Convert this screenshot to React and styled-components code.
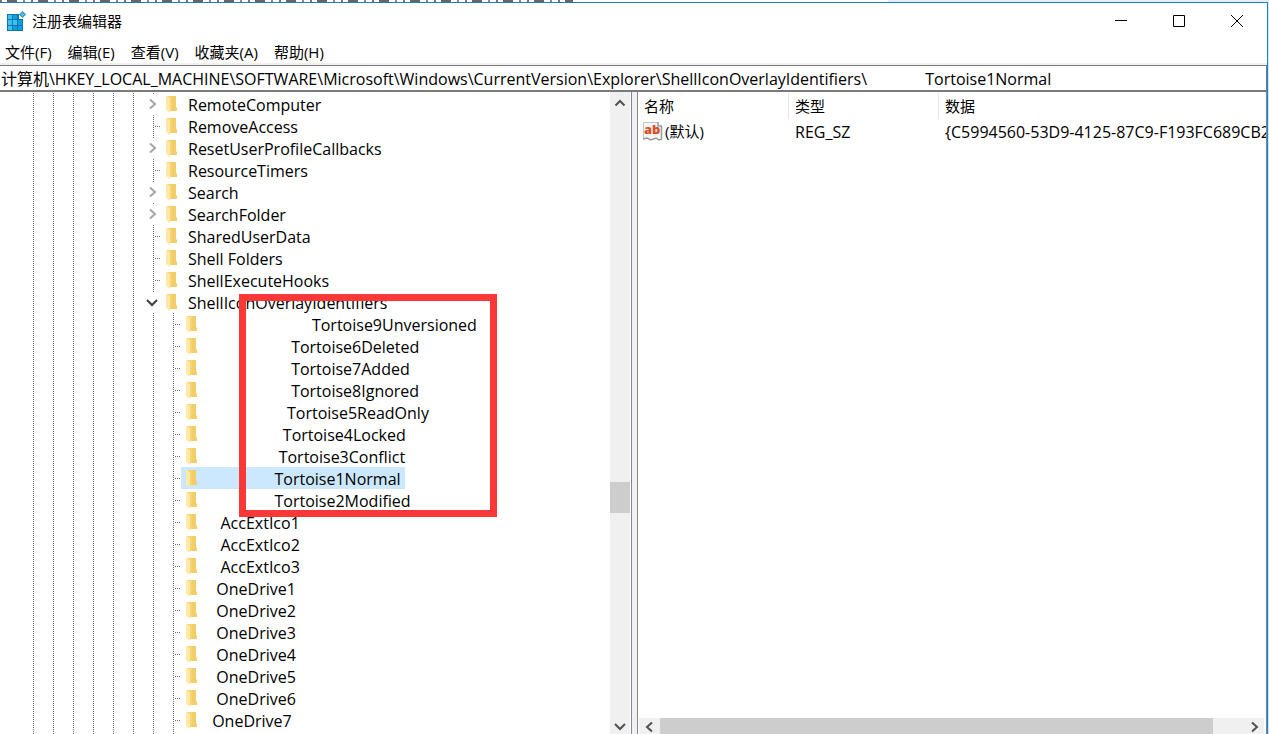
import styled, { createGlobalStyle } from 'styled-components'
import { useState } from 'react'

const NODES = [
    { level: 0, name: "RemoteComputer", state: "closed" },
    { level: 0, name: "RemoveAccess" },
    { level: 0, name: "ResetUserProfileCallbacks", state: "closed" },
    { level: 0, name: "ResourceTimers" },
    { level: 0, name: "Search", state: "closed" },
    { level: 0, name: "SearchFolder", state: "closed" },
    { level: 0, name: "SharedUserData" },
    { level: 0, name: "Shell Folders" },
    { level: 0, name: "ShellExecuteHooks" },
    { level: 0, name: "ShellIconOverlayIdentifiers", state: "open" },
    { level: 1, name: "Tortoise9Unversioned", spaces: 25 },
    { level: 1, name: "Tortoise6Deleted", spaces: 20 },
    { level: 1, name: "Tortoise7Added", spaces: 20 },
    { level: 1, name: "Tortoise8Ignored", spaces: 20 },
    { level: 1, name: "Tortoise5ReadOnly", spaces: 19 },
    { level: 1, name: "Tortoise4Locked", spaces: 18 },
    { level: 1, name: "Tortoise3Conflict", spaces: 17 },
    { level: 1, name: "Tortoise1Normal", spaces: 16 },
    { level: 1, name: "Tortoise2Modified", spaces: 16 },
    { level: 1, name: "AccExtIco1", spaces: 3 },
    { level: 1, name: "AccExtIco2", spaces: 3 },
    { level: 1, name: "AccExtIco3", spaces: 3 },
    { level: 1, name: "OneDrive1", spaces: 2 },
    { level: 1, name: "OneDrive2", spaces: 2 },
    { level: 1, name: "OneDrive3", spaces: 2 },
    { level: 1, name: "OneDrive4", spaces: 2 },
    { level: 1, name: "OneDrive5", spaces: 2 },
    { level: 1, name: "OneDrive6", spaces: 2 },
    { level: 1, name: "OneDrive7", spaces: 1 },
]
const MENUS = ["文件(F)", "编辑(E)", "查看(V)", "收藏夹(A)", "帮助(H)"]
const ROOT_PATH = "计算机\\HKEY_LOCAL_MACHINE\\SOFTWARE\\Microsoft\\Windows\\CurrentVersion\\Explorer\\ShellIconOverlayIdentifiers\\"

const GlobalStyle = createGlobalStyle`
    * {
        box-sizing: border-box;
    }
    body {
        margin: 0;
        overflow: hidden;
        background-color: #d5e6f5;
    }
    body, button, input {
        font-family: "Open Sans", "Noto Sans CJK SC", sans-serif;
        font-size: 15px;
        line-height: 22px;
        color: #000;
    }
`
const Screen = styled.div`
    display: flex;
    flex-direction: column;
    height: 100vh;
    padding-right: 1px;
`
const Behind = styled.div`
    height: 2px;
    flex: none;
    background:
        repeating-linear-gradient(90deg, #777 0 2px, transparent 2px 7px, #666 7px 17px, transparent 17px 23px, #888 23px 25px, transparent 25px 31px) 0 0 / 573px 2px no-repeat,
        linear-gradient(90deg, #fff 70%, #e4eef8 70%);
`
const Window = styled.div`
    flex: 1;
    min-height: 0;
    display: flex;
    flex-direction: column;
    background-color: #fff;
    border-top: 1px solid #1a7fd0;
    border-right: 1px solid #1a7fd0;
`
const TitleBar = styled.header`
    display: flex;
    align-items: center;
    height: 36px;
    flex: none;
    padding: 0 1px 0 6px;
`
const Title = styled.h1`
    flex: 1;
    margin: 0 0 0 6px;
    font-size: 15px;
    font-weight: normal;
`
const CaptionButton = styled.button`
    display: flex;
    align-items: center;
    justify-content: center;
    width: 58px;
    height: 36px;
    padding: 0;
    border: none;
    background: none;
    &:hover {
        background-color: #e5e5e5;
    }
`
const MenuBar = styled.nav`
    display: flex;
    align-items: center;
    gap: 16px;
    height: 26px;
    flex: none;
    padding: 2px 0 0 5px;
    border-bottom: 2px solid #f0f0f0;
`
const MenuButton = styled.button`
    padding: 0;
    border: none;
    background: none;
`
const Address = styled.input`
    width: 100%;
    height: 27px;
    flex: none;
    padding: 0 2px 0 1px;
    border: 1px solid #7a7a7e;
    border-bottom-width: 2px;
    border-left: none;
    border-radius: 0;
    background-color: #fff;
    font-size: 16px;
    outline: none;
`
const Panes = styled.main`
    flex: 1;
    min-height: 0;
    display: flex;
    border-right: 1px solid #828790;
`
const TreePane = styled.section`
    position: relative;
    display: flex;
    width: 50%;
    max-width: 632px;
    flex: none;
    border-right: 1px solid #828790;
`
const Tree = styled.ul`
    flex: 1;
    min-width: 0;
    margin: 0;
    padding: 1px 0 0 23px;
    overflow: hidden;
    list-style: none;
`
const TreeRow = styled.li`
    display: flex;
    height: 22px;
`
const Guide = styled.span`
    width: 20px;
    flex: none;
    background: repeating-linear-gradient(#6a6a6a 0 1px, transparent 1px 2px) 10px 0 / 1px 100% no-repeat;
`
const Branch = styled(Guide)`
    display: flex;
    align-items: center;
    width: 18px;
    &::after {
        content: "";
        width: 7px;
        height: 1px;
        margin-left: 11px;
        background: repeating-linear-gradient(90deg, transparent 0 1px, #6a6a6a 1px 2px);
    }
`
const Expander = styled.button`
    display: flex;
    align-items: center;
    justify-content: center;
    width: 18px;
    flex: none;
    padding: 0;
    border: none;
    background: linear-gradient(#6a6a6a, #6a6a6a) 10px 0 / 1px 1px no-repeat;
`
const NodeButton = styled.button`
    display: flex;
    align-items: center;
    gap: 9px;
    padding: 0 4px;
    border: none;
    background-color: ${props => props.$selected ? "#cce8ff" : "transparent"};
    font-size: 16px;
`
const NodeLabel = styled.span`
    padding-top: 2px;
    white-space: pre;
`
const Highlight = styled.div`
    position: absolute;
    left: 239px;
    top: 202px;
    width: 258px;
    height: 223px;
    border: 7px solid #fb3838;
    pointer-events: none;
`
const ScrollTrack = styled.div`
    display: flex;
    flex-direction: ${props => props.$horizontal ? "row" : "column"};
    ${props => props.$horizontal ? "height: 16px; margin: 0 2px 0 1px;" : "width: 20px; padding-top: 3px; margin-right: 1px;"}
    flex: none;
    background-color: #f0f0f0;
`
const ScrollArrow = styled.button`
    display: flex;
    align-items: center;
    justify-content: center;
    width: ${props => props.$wide ? "21px" : "19px"};
    height: ${props => props.$wide ? "18px" : "16px"};
    flex: none;
    padding: 0;
    border: none;
    background: none;
`
const ScrollSpace = styled.div`
    flex: ${props => props.$grow};
`
const ScrollThumb = styled.div`
    flex: ${props => props.$size};
    background-color: #cdcdcd;
`
const Splitter = styled.div`
    width: 6px;
    flex: none;
    background-color: #f0f0f0;
    border-right: 1px solid #828790;
`
const ValuePane = styled.section`
    flex: 1;
    min-width: 0;
    display: flex;
    flex-direction: column;
`
const TableArea = styled.div`
    flex: 1;
    min-height: 0;
    overflow: hidden;
`
const Table = styled.table`
    width: 100%;
    table-layout: fixed;
    border-collapse: collapse;
`
const HeadCell = styled.th`
    width: ${props => props.$width};
    height: 27px;
    padding: 0 6px;
    font-weight: normal;
    text-align: left;
    background: linear-gradient(#e5e5e5, #e5e5e5) right 1px / 1px 26px no-repeat;
    &:last-child {
        background: none;
    }
`
const Cell = styled.td`
    height: 24px;
    padding: ${props => props.$icon ? "0 0 0 5px" : "2px 0 0 6px"};
    font-size: ${props => props.$icon ? "15px" : "16px"};
    white-space: nowrap;
    overflow: hidden;
`
const ValueName = styled.span`
    display: flex;
    align-items: center;
    gap: 2px;
`

const RegistryIcon = () => (
    <svg width="20" height="20" viewBox="0 0 20 20">
        <path fill="#0b78b4" d="M1 3h12v5h4v12H1z" />
        <path fill="#3cc1f0" d="M2 4h4v4H2zM2 9h4v5H2zM7 9h4v5H7zM2 15h4v4H2z" />
        <path fill="#129ede" d="M7 4h4v4H7zM12 9h4v5h-4zM7 15h4v4H7zM12 15h4v4h-4z" />
        <path fill="#2f8fbe" d="M16.500 0l3.500 3.500-3.500 3.500-3.500-3.500z" />
        <path fill="#5fbfe6" d="M16.500 1.500l2 2-2 2-2-2z" />
    </svg>
)
const FolderIcon = () => (
    <svg width="14" height="18" viewBox="0 0 14 18">
        <path fill="#f6d474" d="M2 1h9v11l1 1v3H4z" />
        <path fill="#eec45c" d="M7 1h4v11l1 1v3H7z" opacity=".4" />
        <path fill="#ffe9a6" d="M1 1h1l3 2v15l-4-3z" />
    </svg>
)
const StringIcon = () => (
    <svg width="20" height="20" viewBox="0 0 20 20">
        <path fill="#f6f6f6" d="M0 1h15l4 4v13l-3 1-4-2-4 2-4-1-4 1z" />
        <path fill="none" stroke="#c4c4c4" d="M.5 18V1.500H15" />
        <path fill="none" stroke="#9a9a9a" strokeWidth="1.500" d="M15 1v4h4M18.500 5v13M0 18l4-1 4 2 5-2 3 2 3-1" />
        <text x="1" y="13" fontFamily="Open Sans" fontWeight="800" fontSize="13" fill="#dc5028">ab</text>
    </svg>
)
const Chevron = ({ direction, color = "#505050", size = 12, weight = 2 }) => {
    const paths = {
        right: "M4 1.500l5 4.500-5 4.500",
        left: "M8 1.500L3 6l5 4.500",
        down: "M1 4l5 5 5-5",
        up: "M1.500 8.500L6 4l4.500 4.500",
    }
    return (
        <svg width={size} height={size} viewBox="0 0 12 12">
            <path d={paths[direction]} fill="none" stroke={color} strokeWidth={weight} />
        </svg>
    )
}

const TreeNode = ({ node, selected, onSelect }) => (
    <TreeRow>
        {Array.from({ length: 6 + node.level }, (_, index) => <Guide key={index} />)}
        {node.state ? <Expander aria-label={node.name}>
            {node.state === "open"
                ? <Chevron direction="down" color="#404040" />
                : <Chevron direction="right" color="#a6a6a6" />}
        </Expander> : <Branch />}
        <NodeButton $selected={selected} onClick={() => onSelect(node.name)}>
            <FolderIcon />
            <NodeLabel>{" ".repeat(node.spaces || 0) + node.name}</NodeLabel>
        </NodeButton>
    </TreeRow>
)

const App = () => {
    const [selected, setSelected] = useState("Tortoise1Normal")
    const [address, setAddress] = useState(ROOT_PATH + " ".repeat(14) + "Tortoise1Normal")

    return (
        <>
            <GlobalStyle />
            <Screen>
                <Behind />
                <Window>
                    <TitleBar>
                        <RegistryIcon />
                        <Title>注册表编辑器</Title>
                        <CaptionButton aria-label="最小化">
                            <svg width="12" height="12"><path d="M0 5.500h12" stroke="#000" /></svg>
                        </CaptionButton>
                        <CaptionButton aria-label="最大化">
                            <svg width="12" height="12"><path d="M.5.5h11v11H.5z" fill="none" stroke="#000" /></svg>
                        </CaptionButton>
                        <CaptionButton aria-label="关闭">
                            <svg width="12" height="12"><path d="M0 0l12 12M12 0L0 12" stroke="#000" /></svg>
                        </CaptionButton>
                    </TitleBar>
                    <MenuBar>
                        {MENUS.map((item) => <MenuButton key={item}>{item}</MenuButton>)}
                    </MenuBar>
                    <Address aria-label="地址" value={address} onChange={(e) => setAddress(e.target.value)} />
                    <Panes>
                        <TreePane>
                            <Tree>
                                {NODES.map((node) => (
                                    <TreeNode key={node.name} node={node} selected={node.name === selected} onSelect={setSelected} />
                                ))}
                                {/* the guides run on below the last node */}
                                <TreeRow aria-hidden="true">
                                    {Array.from({ length: 8 }, (_, index) => <Guide key={index} />)}
                                </TreeRow>
                            </Tree>
                            <ScrollTrack>
                                <ScrollArrow aria-label="向上"><Chevron direction="up" /></ScrollArrow>
                                <ScrollSpace $grow={371} />
                                <ScrollThumb $size={31} />
                                <ScrollSpace $grow={205} />
                                <ScrollArrow aria-label="向下"><Chevron direction="down" /></ScrollArrow>
                            </ScrollTrack>
                            <Highlight />
                        </TreePane>
                        <Splitter />
                        <ValuePane>
                            <TableArea>
                                <Table>
                                    <thead>
                                        <tr>
                                            <HeadCell $width="151px">名称</HeadCell>
                                            <HeadCell $width="150px">类型</HeadCell>
                                            <HeadCell>数据</HeadCell>
                                        </tr>
                                    </thead>
                                    <tbody>
                                        <tr>
                                            <Cell $icon><ValueName><StringIcon />(默认)</ValueName></Cell>
                                            <Cell>REG_SZ</Cell>
                                            <Cell>{"{C5994560-53D9-4125-87C9-F193FC689CB2"}</Cell>
                                        </tr>
                                    </tbody>
                                </Table>
                            </TableArea>
                            <ScrollTrack $horizontal>
                                <ScrollArrow $wide aria-label="向左"><Chevron direction="left" /></ScrollArrow>
                                <ScrollThumb $size={554} />
                                <ScrollSpace $grow={30} />
                                <ScrollArrow $wide aria-label="向右"><Chevron direction="right" /></ScrollArrow>
                            </ScrollTrack>
                        </ValuePane>
                    </Panes>
                </Window>
            </Screen>
        </>
    )
}

export default App
